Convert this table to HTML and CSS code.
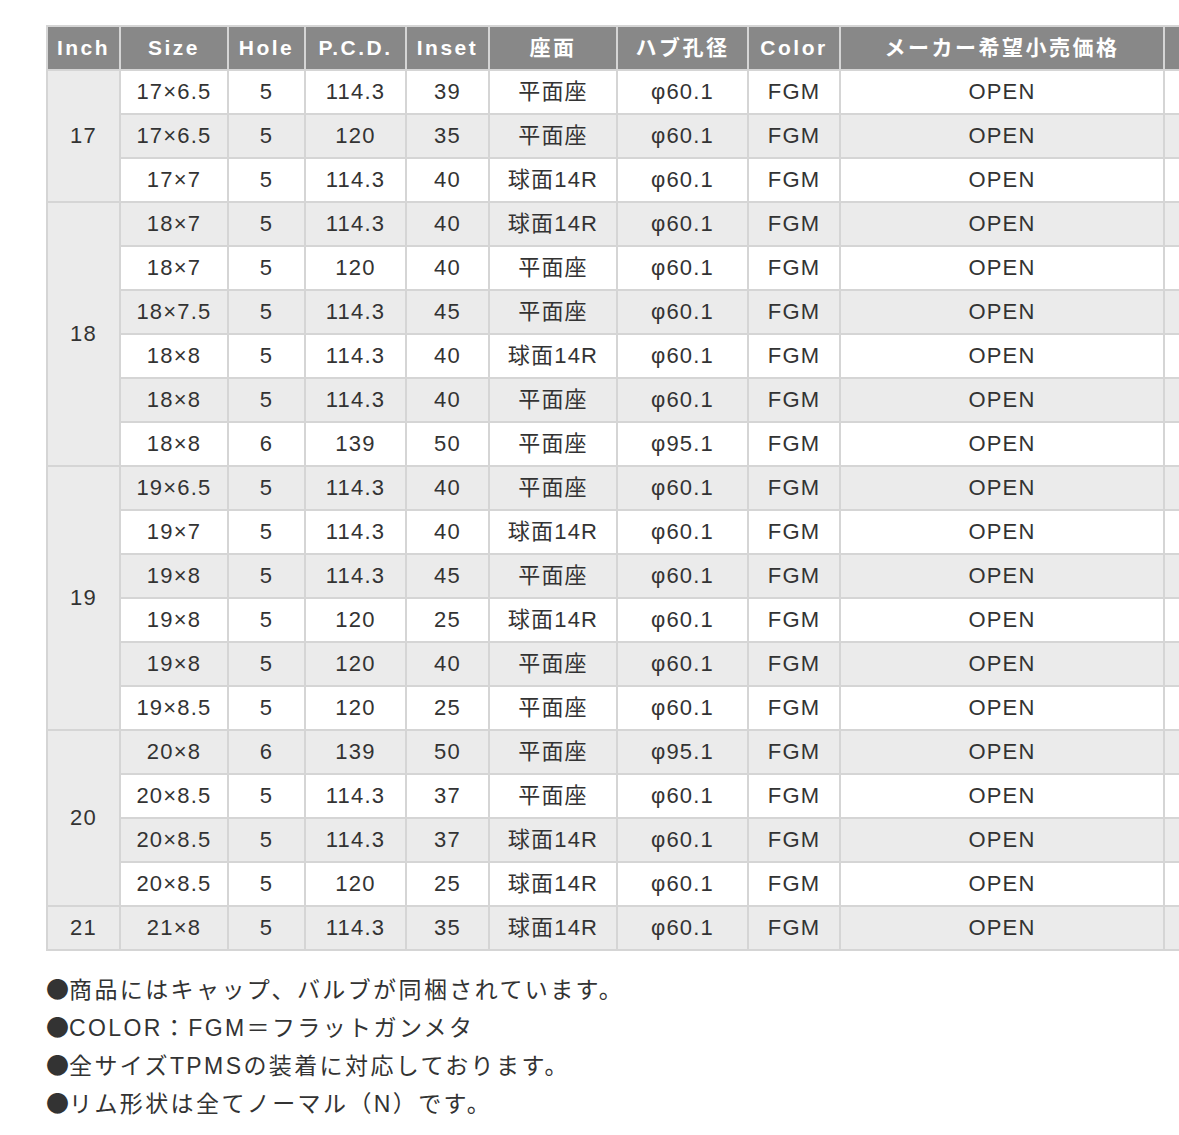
FILE: index.html
```html
<!DOCTYPE html>
<html lang="ja">
<head>
<meta charset="utf-8">
<link rel="stylesheet" href="styles.css">
</head>
<body>
<div class="page">
<table class="spec">
<colgroup>
<col class="c-inch"><col class="c-size"><col class="c-hole"><col class="c-pcd"><col class="c-inset"><col class="c-seat"><col class="c-hub"><col class="c-color"><col class="c-price"><col class="c-extra">
</colgroup>
<thead>
<tr><th>Inch</th><th>Size</th><th>Hole</th><th>P.C.D.</th><th>Inset</th><th>座面</th><th>ハブ孔径</th><th>Color</th><th>メーカー希望小売価格</th><th></th></tr>
</thead>
<tbody>
<tr><td class="inch" rowspan="3">17</td><td>17×6.5</td><td>5</td><td>114.3</td><td>39</td><td>平面座</td><td>φ60.1</td><td>FGM</td><td>OPEN</td><td></td></tr>
<tr><td>17×6.5</td><td>5</td><td>120</td><td>35</td><td>平面座</td><td>φ60.1</td><td>FGM</td><td>OPEN</td><td></td></tr>
<tr><td>17×7</td><td>5</td><td>114.3</td><td>40</td><td>球面14R</td><td>φ60.1</td><td>FGM</td><td>OPEN</td><td></td></tr>
<tr><td class="inch" rowspan="6">18</td><td>18×7</td><td>5</td><td>114.3</td><td>40</td><td>球面14R</td><td>φ60.1</td><td>FGM</td><td>OPEN</td><td></td></tr>
<tr><td>18×7</td><td>5</td><td>120</td><td>40</td><td>平面座</td><td>φ60.1</td><td>FGM</td><td>OPEN</td><td></td></tr>
<tr><td>18×7.5</td><td>5</td><td>114.3</td><td>45</td><td>平面座</td><td>φ60.1</td><td>FGM</td><td>OPEN</td><td></td></tr>
<tr><td>18×8</td><td>5</td><td>114.3</td><td>40</td><td>球面14R</td><td>φ60.1</td><td>FGM</td><td>OPEN</td><td></td></tr>
<tr><td>18×8</td><td>5</td><td>114.3</td><td>40</td><td>平面座</td><td>φ60.1</td><td>FGM</td><td>OPEN</td><td></td></tr>
<tr><td>18×8</td><td>6</td><td>139</td><td>50</td><td>平面座</td><td>φ95.1</td><td>FGM</td><td>OPEN</td><td></td></tr>
<tr><td class="inch" rowspan="6">19</td><td>19×6.5</td><td>5</td><td>114.3</td><td>40</td><td>平面座</td><td>φ60.1</td><td>FGM</td><td>OPEN</td><td></td></tr>
<tr><td>19×7</td><td>5</td><td>114.3</td><td>40</td><td>球面14R</td><td>φ60.1</td><td>FGM</td><td>OPEN</td><td></td></tr>
<tr><td>19×8</td><td>5</td><td>114.3</td><td>45</td><td>平面座</td><td>φ60.1</td><td>FGM</td><td>OPEN</td><td></td></tr>
<tr><td>19×8</td><td>5</td><td>120</td><td>25</td><td>球面14R</td><td>φ60.1</td><td>FGM</td><td>OPEN</td><td></td></tr>
<tr><td>19×8</td><td>5</td><td>120</td><td>40</td><td>平面座</td><td>φ60.1</td><td>FGM</td><td>OPEN</td><td></td></tr>
<tr><td>19×8.5</td><td>5</td><td>120</td><td>25</td><td>平面座</td><td>φ60.1</td><td>FGM</td><td>OPEN</td><td></td></tr>
<tr><td class="inch" rowspan="4">20</td><td>20×8</td><td>6</td><td>139</td><td>50</td><td>平面座</td><td>φ95.1</td><td>FGM</td><td>OPEN</td><td></td></tr>
<tr><td>20×8.5</td><td>5</td><td>114.3</td><td>37</td><td>平面座</td><td>φ60.1</td><td>FGM</td><td>OPEN</td><td></td></tr>
<tr><td>20×8.5</td><td>5</td><td>114.3</td><td>37</td><td>球面14R</td><td>φ60.1</td><td>FGM</td><td>OPEN</td><td></td></tr>
<tr><td>20×8.5</td><td>5</td><td>120</td><td>25</td><td>球面14R</td><td>φ60.1</td><td>FGM</td><td>OPEN</td><td></td></tr>
<tr><td class="inch" rowspan="1">21</td><td>21×8</td><td>5</td><td>114.3</td><td>35</td><td>球面14R</td><td>φ60.1</td><td>FGM</td><td>OPEN</td><td></td></tr>
</tbody>
</table>
<div class="notes">
<p><span class="bullet">●</span>商品にはキャップ、バルブが同梱されています。</p>
<p><span class="bullet">●</span>COLOR：FGM＝フラットガンメタ</p>
<p><span class="bullet">●</span>全サイズTPMSの装着に対応しております。</p>
<p><span class="bullet">●</span>リム形状は全てノーマル（N）です。</p>
</div>
</div>
</body>
</html>
```

FILE: styles.css
```css
html, body {
  margin: 0;
  padding: 0;
  background: #ffffff;
  overflow: hidden;
}

.page {
  padding: 25px 0 0 46px;
  width: 1400px;
  color: #333333;
  font-family: "Liberation Sans", "Noto Sans CJK JP", sans-serif;
}

.spec {
  border-collapse: separate;
  border-spacing: 0;
  table-layout: fixed;
  width: 1219px;
  border-top: 2px solid #d5d5d5;
  border-left: 2px solid #d5d5d5;
}

.c-inch { width: 73px; }
.c-size { width: 108px; }
.c-hole { width: 77px; }
.c-pcd { width: 101px; }
.c-inset { width: 83px; }
.c-seat { width: 128px; }
.c-hub { width: 131px; }
.c-color { width: 92px; }
.c-price { width: 324px; }
.c-extra { width: 100px; }

.spec th,
.spec td {
  box-sizing: border-box;
  border-right: 2px solid #d5d5d5;
  border-bottom: 2px solid #d5d5d5;
  padding: 0;
  text-align: center;
  vertical-align: middle;
  white-space: nowrap;
  overflow: hidden;
}

.spec th {
  height: 44px;
  line-height: 24px;
  background: #888888;
  color: #ffffff;
  font-weight: bold;
  font-size: 21px;
  letter-spacing: 2.5px;
}

.spec td {
  height: 44px;
  line-height: 26px;
  font-size: 22px;
  letter-spacing: 1.2px;
  background: #ffffff;
}

.spec tbody tr:nth-child(even) td {
  background: #ebebeb;
}

.spec td.inch {
  background: #ebebeb;
}

.notes {
  margin-top: 18px;
  font-family: "Liberation Sans", "Noto Sans CJK JP", sans-serif;
  font-size: 23px;
  letter-spacing: 2.4px;
  color: #333333;
}

.notes p {
  margin: 0;
  line-height: 38px;
  height: 38px;
}

.bullet {
  font-family: "Noto Sans CJK JP", sans-serif;
  letter-spacing: 0;
}
```
